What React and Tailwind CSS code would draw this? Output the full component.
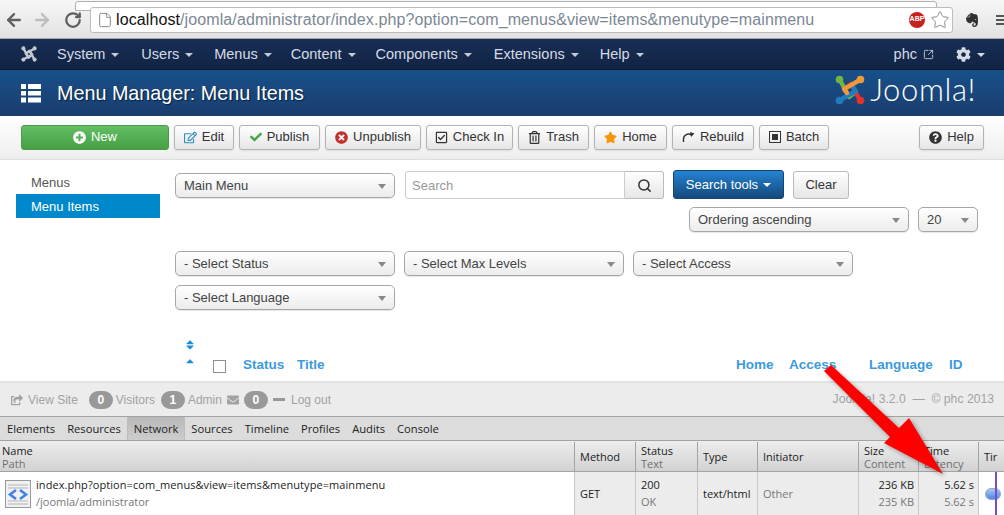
import React from "react";
import { ArrowLeft, ArrowRight, RotateCw, File, Star, SquareArrowOutUpRight, Search } from "lucide-react";
import {
  FaPlusCircle, FaRegEdit, FaCheck, FaTimesCircle, FaRegCheckSquare, FaRegTrashAlt, FaStar, FaQuestionCircle,
  FaCog, FaEvernote, FaCaretDown, FaCaretUp, FaShareSquare, FaEnvelope,
} from "react-icons/fa";

const sans = "font-['Liberation_Sans',Arial,sans-serif]";
const dev = "font-['Open_Sans','Noto_Sans',sans-serif]";

function Caret({ className = "border-t-white" }) {
  return <span className={"inline-block w-0 h-0 border-x-[4px] border-x-transparent border-t-[4px] " + className} />;
}

function JoomlaMark({ size = 30, colors }) {
  const [g, o, b, r] = colors;
  return (
    <svg width={size} height={size} viewBox="0 0 30 30" fill="none" strokeWidth="4.4" strokeLinecap="round" strokeLinejoin="round">
      <path d="M5 5 L14 22 L18 19" stroke={g} />
      <circle cx="4.5" cy="4.5" r="3.8" fill={g} />
      <path d="M25 25 L16 9 L12 12" stroke={r} />
      <circle cx="25.5" cy="25.5" r="3.8" fill={r} />
      <path d="M5 25 L21 16 L18 12" stroke={b} />
      <circle cx="4.5" cy="25.5" r="3.8" fill={b} />
      <path d="M25 5 L9 14 L12 18" stroke={o} />
      <circle cx="25.5" cy="4.5" r="3.8" fill={o} />
    </svg>
  );
}

function NavItem({ label, mr }) {
  return (
    <div className={"flex items-center gap-[6px] " + mr}>
      <span>{label}</span>
      <Caret className="border-t-[#c4ccd8]" />
    </div>
  );
}

function ToolBtn({ w, icon, label, className = "" }) {
  return (
    <button className={"h-[25px] pb-[1px] flex items-center justify-center gap-[5px] rounded-[3px] border border-[#b3b3b3] bg-linear-to-b from-white to-[#e6e6e6] text-[13px] text-[#333] shadow-[0_1px_2px_rgba(0,0,0,0.08)] " + w + " " + className}>
      {icon}
      <span>{label}</span>
    </button>
  );
}

function Select({ w, label, className = "" }) {
  return (
    <div className={"h-[25px] flex items-center justify-between px-[8px] pt-[1px] rounded-[5px] border border-[#a6a6a6] bg-linear-to-b from-white to-[#ececec] text-[13px] text-[#444] shadow-[0_1px_1px_rgba(0,0,0,0.1)] " + w + " " + className}>
      <span>{label}</span>
      <Caret className="border-t-[5px] border-t-[#888]" />
    </div>
  );
}

function HeadCell({ w, top, bottom }) {
  return (
    <div className={"h-full flex flex-col justify-center pl-[5px] border-l border-[#a3a3a3] " + w}>
      <span className="text-[#222]">{top}</span>
      {bottom && <span className="text-[#6f6f6f]">{bottom}</span>}
    </div>
  );
}

function RowCell({ w, top, bottom, right, grey }) {
  return (
    <div className={"h-full flex flex-col justify-center border-l border-[#c8c8c8] " + (right ? "items-end pr-[4px] " : "pl-[5px] ") + w}>
      <span className={grey ? "text-[#777]" : "text-[#222]"}>{top}</span>
      {bottom && <span className="text-[#777] mt-[1px]">{bottom}</span>}
    </div>
  );
}

function Badge({ children, className = "" }) {
  return <span className={"w-[24px] h-[18px] rounded-full bg-[#999] text-white text-[12px] font-bold flex items-center justify-center " + className}>{children}</span>;
}

export default function App() {
  return (
    <div className={"relative w-[1004px] h-[515px] overflow-hidden bg-white " + sans}>
      {/* Browser chrome */}
      <div className="relative h-[39px] flex items-center pt-[1px] bg-linear-to-b from-[#f7f7f7] to-[#e2e2e2] border-b border-[#a8a8a8]">
        <div className="absolute left-[75px] top-[1px] w-[862px] h-[10px] rounded-t-[3px] border border-[#b0b0b0] bg-white" />
        <div className="flex items-center pl-[4px] w-[90px] gap-[6px] text-[#5f5f5f]">
          <ArrowLeft size={20} strokeWidth={2.8} />
          <ArrowRight size={20} strokeWidth={2.8} className="text-[#bdbdbd] ml-[2px]" />
          <RotateCw size={18} strokeWidth={3} className="ml-[6px]" />
        </div>
        <div className="relative shrink-0 h-[26px] flex items-center w-[863px] rounded-[3px] border border-[#bcbcbc] bg-white pl-[6px]">
          <File size={16} strokeWidth={1.5} className="text-[#8a8a8a] mr-[3px]" />
          <span className="text-[16px] pt-[1px] text-[#7b8794] whitespace-nowrap tracking-[0.1px]"><span className="text-[#111]">localhost</span>/joomla/administrator/index.php?option=com_menus&amp;view=items&amp;menutype=mainmenu</span>
          <div className="ml-auto mr-[2px] flex items-center gap-[5px]">
            <span className="w-[16px] h-[16px] rounded-full bg-[#c9201c] text-white text-[7px] font-bold flex items-center justify-center">ABP</span>
            <Star size={20} strokeWidth={1.2} className="text-[#8f8f8f]" />
          </div>
        </div>
        <FaEvernote size={16} className="ml-[11px] text-[#2f2f2f]" />
        <div className="ml-[16px] flex flex-col gap-[2px]">
          <span className="w-[8px] h-[2px] bg-[#555]" />
          <span className="w-[8px] h-[2px] bg-[#555]" />
          <span className="w-[8px] h-[2px] bg-[#555]" />
        </div>
      </div>

      {/* Nav */}
      <div className="h-[31px] flex items-center pt-[1px] bg-linear-to-b from-[#172e56] to-[#122444] border-b border-[#0d1c36] text-[14.5px] text-[#d5dbe4]">
        <div className="ml-[21px] mr-[20px] -mt-[1px]"><JoomlaMark size={16} colors={["#c3c9d2", "#c3c9d2", "#c3c9d2", "#c3c9d2"]} /></div>
        <NavItem label="System" mr="mr-[22px]" />
        <NavItem label="Users" mr="mr-[21px]" />
        <NavItem label="Menus" mr="mr-[19px]" />
        <NavItem label="Content" mr="mr-[20px]" />
        <NavItem label="Components" mr="mr-[22px]" />
        <NavItem label="Extensions" mr="mr-[21px]" />
        <NavItem label="Help" mr="" />
        <div className="ml-auto flex items-center gap-[6px]">
          <span>phc</span>
          <SquareArrowOutUpRight size={11} strokeWidth={2} className="text-[#c4ccd8]" />
        </div>
        <div className="ml-[22px] mr-[19px] flex items-center gap-[6px] text-[#d5dbe4]">
          <FaCog size={15} />
          <Caret className="border-t-[#d5dbe4]" />
        </div>
      </div>

      {/* Title */}
      <div className="h-[46px] flex items-center bg-linear-to-b from-[#17508a] to-[#1a3d6e]">
        <div className="ml-[21px] mr-[16px] flex items-center">
          <svg width="20" height="20" viewBox="0 0 20 20" fill="#fff"><rect x="0" y="1" width="5" height="5" /><rect x="7" y="1" width="13" height="5" /><rect x="0" y="8" width="5" height="4.5" /><rect x="7" y="8" width="13" height="4.5" /><rect x="0" y="14.5" width="5" height="5" /><rect x="7" y="14.5" width="13" height="5" /></svg>
        </div>
        <h1 className="text-[19.75px] pt-[1px] text-white [text-shadow:1px_1px_1px_#062040]">Menu Manager: Menu Items</h1>
        <div className="ml-auto mr-[28px] flex items-center gap-[5px] -mt-[6px]">
          <JoomlaMark size={30} colors={["#6fb53f", "#f0983a", "#1f7cc0", "#e2332e"]} />
          <span className="font-['Lato',sans-serif] font-light text-[31px] tracking-[0.6px] leading-none text-white -mt-[1px]">Joomla!</span>
        </div>
      </div>

      {/* Toolbar */}
      <div className="h-[44px] flex items-center gap-[5px] pl-[21px] bg-linear-to-b from-white to-[#eeeeee] border-b border-[#dddddd]">
        <button className="w-[148px] h-[25px] pb-[1px] flex items-center justify-center gap-[5px] rounded-[3px] border border-[#4a9a48] bg-linear-to-b from-[#63bf63] to-[#46a046] text-[13px] text-white">
          <FaPlusCircle size={13} />
          <span>New</span>
        </button>
        <ToolBtn w="w-[60px]" icon={<FaRegEdit size={13} className="text-[#2e8dc0]" />} label="Edit" />
        <ToolBtn w="w-[81px]" icon={<FaCheck size={12} className="text-[#46a546]" />} label="Publish" />
        <ToolBtn w="w-[96px]" icon={<FaTimesCircle size={13} className="text-[#c4302b]" />} label="Unpublish" />
        <ToolBtn w="w-[87px]" icon={<FaRegCheckSquare size={13} className="text-[#333]" />} label="Check In" />
        <ToolBtn w="w-[71px]" icon={<FaRegTrashAlt size={13} className="text-[#333]" />} label="Trash" />
        <ToolBtn w="w-[73px]" icon={<FaStar size={13} className="text-[#f89406]" />} label="Home" />
        <ToolBtn w="w-[82px]" icon={
          <svg width="13" height="12" viewBox="0 0 13 12" fill="none"><path d="M1.5 11V8a5 5 0 0 1 8-4" stroke="#333" strokeWidth="1.4" /><path d="M8 1l4.5 1.5L9 6z" fill="#333" /></svg>
        } label="Rebuild" />
        <ToolBtn w="w-[70px]" icon={<span className="w-[12px] h-[12px] border border-[#333] p-[2px] flex"><span className="grow bg-[#333]" /></span>} label="Batch" />
        <ToolBtn w="w-[65px]" className="ml-auto mr-[20px]" icon={<FaQuestionCircle size={13} className="text-[#333]" />} label="Help" />
      </div>

      {/* Content */}
      <div className="h-[221px] flex">
        <div className="w-[144px] ml-[16px] mt-[10px] shrink-0 text-[13px]">
          <div className="h-[24px] flex items-center pt-[1px] pl-[15px] text-[#555]">Menus</div>
          <div className="h-[24px] flex items-center pt-[1px] pl-[15px] bg-[#0088cc] text-white">Menu Items</div>
        </div>
        <div className="ml-[15px] mt-[10px] flex flex-col">
          <div className="flex items-start">
            <Select w="w-[220px]" label="Main Menu" className="mt-[3px]" />
            <div className="ml-[10px] mt-[1px] flex h-[28px]">
              <div className="w-[220px] pl-[6px] pt-[1px] flex items-center rounded-l-[3px] border border-[#cccccc] text-[13px] text-[#999]">Search</div>
              <div className="w-[39px] flex items-center justify-center rounded-r-[3px] border border-l-0 border-[#bbbbbb] bg-linear-to-b from-white to-[#e6e6e6] text-[#333]"><Search size={15} strokeWidth={2.4} /></div>
            </div>
            <button className="ml-[9px] w-[111px] h-[29px] flex items-center justify-center gap-[5px] rounded-[3px] bg-linear-to-b from-[#2384d3] to-[#15497c] border border-[#124476] text-[13px] text-white">
              Search tools <Caret />
            </button>
            <button className="ml-[9px] mt-[1px] w-[56px] h-[28px] rounded-[3px] border border-[#bbbbbb] bg-linear-to-b from-white to-[#e6e6e6] text-[13px] text-[#333]">Clear</button>
          </div>
          <div className="flex mt-[8px] ml-[514px] gap-[9px]">
            <Select w="w-[220px]" label="Ordering ascending" />
            <Select w="w-[60px]" label="20" />
          </div>
          <div className="flex mt-[19px] gap-[9px]">
            <Select w="w-[220px]" label="- Select Status" />
            <Select w="w-[220px]" label="- Select Max Levels" />
            <Select w="w-[220px]" label="- Select Access" />
          </div>
          <Select w="w-[220px]" label="- Select Language" className="mt-[9px]" />
          <div className="mt-[29px] flex items-start h-[38px] text-[13.5px] leading-[16px] font-bold text-[#3b9bdd]">
            <div className="w-[30px] -mt-[3px] flex flex-col items-center text-[#1b8fd6]">
              <span className="flex flex-col items-center mb-[2px]"><FaCaretUp size={12} className="-mb-[7px]" /><FaCaretDown size={12} /></span>
              <FaCaretUp size={12} />
            </div>
            <span className="w-[13px] h-[13px] mt-[21px] ml-[8px] mr-[17px] border border-[#8f8f8f]" />
            <div className="flex mt-[18px]">
              <span className="w-[54px]">Status</span>
              <span className="w-[439px]">Title</span>
              <span className="w-[53px]">Home</span>
              <span className="w-[80px]">Access</span>
              <span className="w-[80px]">Language</span>
              <span>ID</span>
            </div>
          </div>
        </div>
      </div>

      {/* Footer */}
      <div className="h-[35px] flex items-center bg-[#ececec] border-t-2 border-[#e2e2e2] pl-[11px] pr-[10px] text-[12px] text-[#a2a2a2]">
        <FaShareSquare size={12} className="mr-[5px]" />
        <span>View Site</span>
        <Badge className="ml-[11px] mr-[3px]">0</Badge>
        <span>Visitors</span>
        <Badge className="ml-[6px] mr-[3px]">1</Badge>
        <span>Admin</span>
        <FaEnvelope size={12} className="ml-[5px]" />
        <Badge className="ml-[5px] mr-[5px]">0</Badge>
        <span className="w-[12px] h-[3px] bg-[#999] mr-[6px]" />
        <span>Log out</span>
        <span className="ml-auto text-[12.2px]">Joomla! 3.2.0 &nbsp;— &nbsp;© phc 2013</span>
      </div>

      {/* DevTools tabs */}
      <div className={"h-[25px] flex items-center border-t border-[#a3a3a3] bg-[#dcdcdc] text-[11.2px] text-[#222] pl-[1px] pt-0 border-b " + dev}>
        <span className="px-[6px] pt-[2px] h-full flex items-center">Elements</span>
        <span className="px-[6px] pt-[2px] h-full flex items-center">Resources</span>
        <span className="px-[6px] pt-[2px] h-full flex items-center bg-linear-to-b from-[#b8b8b8] to-[#cdcdcd] border-x border-[#bdbdbd]">Network</span>
        <span className="px-[6px] pt-[2px] h-full flex items-center">Sources</span>
        <span className="px-[6px] pt-[2px] h-full flex items-center">Timeline</span>
        <span className="px-[6px] pt-[2px] h-full flex items-center">Profiles</span>
        <span className="px-[6px] pt-[2px] h-full flex items-center">Audits</span>
        <span className="px-[6px] pt-[2px] h-full flex items-center">Console</span>
      </div>

      {/* Network header */}
      <div className={"h-[31px] flex bg-linear-to-b from-[#ededed] to-[#d2d2d2] border-b border-[#a3a3a3] text-[11px] leading-[13px] pt-[1px] " + dev}>
        <div className="w-[574px] pl-[2px] flex flex-col justify-center">
          <span className="text-[#222]">Name</span>
          <span className="text-[#6f6f6f]">Path</span>
        </div>
        <HeadCell w="w-[61px]" top="Method" />
        <HeadCell w="w-[62px]" top="Status" bottom="Text" />
        <HeadCell w="w-[60px]" top="Type" />
        <HeadCell w="w-[101px]" top="Initiator" />
        <HeadCell w="w-[60px]" top="Size" bottom="Content" />
        <HeadCell w="w-[60px]" top="Time" bottom="Latency" />
        <HeadCell w="grow" top="Tir" />
      </div>

      {/* Network row */}
      <div className={"h-[43px] flex text-[11px] leading-[16px] " + dev}>
        <div className="w-[574px] flex items-center bg-white pl-[5px]">
          <svg width="26" height="28" viewBox="0 0 26 28" className="mr-[5px] shrink-0">
            <rect x="0.5" y="0.5" width="25" height="27" fill="#eef0f2" stroke="#9a9a9a" />
            <path d="M3 5h20M3 8h20M3 21h20M3 24h20" stroke="#b6b6b6" />
            <path d="M11 10l-6 4.5 6 4.5M15 10l6 4.5-6 4.5" fill="none" stroke="#3f83e6" strokeWidth="2.6" />
          </svg>
          <div className="flex flex-col">
            <span className="text-[#222] tracking-[0.07px]">index.php?option=com_menus&amp;view=items&amp;menutype=mainmenu</span>
            <span className="text-[#777] mt-[1px]">/joomla/administrator</span>
          </div>
        </div>
        <div className="flex grow bg-[#ececec]">
          <RowCell w="w-[61px]" top="GET" />
          <RowCell w="w-[62px]" top="200" bottom="OK" />
          <RowCell w="w-[60px]" top="text/html" />
          <RowCell w="w-[101px]" top="Other" grey />
          <RowCell w="w-[60px]" top="236 KB" bottom="235 KB" right />
          <RowCell w="w-[60px]" top="5.62 s" bottom="5.62 s" right />
          <div className="grow bg-white border-l border-[#c8c8c8] flex items-center pl-[6px] relative">
            <span className="w-[16px] h-[12px] rounded-full bg-linear-to-b from-[#a9c6f2] to-[#4f86e0] border border-[#8fa9cf] shrink-0" />
            <span className="absolute left-[16px] top-0 bottom-0 w-[2px] bg-[#7b4bc4]" />
          </div>
        </div>
      </div>

      {/* Red arrow annotation */}
      <svg className="absolute inset-0 pointer-events-none drop-shadow-[2px_2px_2px_rgba(0,0,0,0.35)]" width="1004" height="515" viewBox="0 0 1004 515">
        <polygon points="824,371 831,365 899,428 909,418 943,474 884,443 890,437" fill="#ff0000" />
      </svg>
    </div>
  );
}
